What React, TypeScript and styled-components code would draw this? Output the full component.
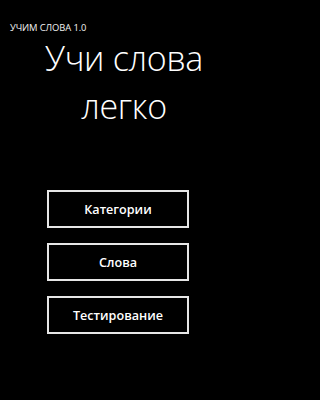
import React from 'react';
import styled, { createGlobalStyle } from 'styled-components';

const GlobalStyle = createGlobalStyle`
  html, body {
    margin: 0;
    padding: 0;
    background: #000;
  }
  body {
    font-family: 'Open Sans', 'Noto Sans', 'Liberation Sans', sans-serif;
    color: #fff;
  }
`;

const Screen = styled.div`
  width: 240px;
  height: 400px;
  background: #000;
  display: flex;
  flex-direction: column;
  overflow: hidden;
`;

const AppName = styled.div`
  margin: 21px 0 0 10px;
  font-size: 9.4px;
  line-height: 13px;
  letter-spacing: -0.1px;
  text-transform: uppercase;
  color: #f2f2f2;
`;

const PageTitle = styled.h1`
  margin: 0 0 0 8px;
  font-size: 34px;
  font-weight: 300;
  line-height: 48px;
  letter-spacing: -0.3px;
  text-align: center;
  color: #fff;
`;

const Menu = styled.div`
  display: flex;
  flex-direction: column;
  align-items: center;
  gap: 15px;
  margin: 60px 0 0 -4px;
`;

const MenuButton = styled.button`
  box-sizing: border-box;
  width: 142px;
  height: 38px;
  background: transparent;
  border: 2px solid #e6e6e6;
  border-radius: 0;
  color: #fff;
  font-family: inherit;
  font-size: 12.6px;
  font-weight: 600;
  padding: 0;
  cursor: pointer;
`;

const items = ['Категории', 'Слова', 'Тестирование'];

export default function App() {
  return (
    <>
      <GlobalStyle />
      <Screen>
        <AppName>Учим слова 1.0</AppName>
        <PageTitle>
          Учи слова
          <br />
          легко
        </PageTitle>
        <Menu>
          {items.map((label) => (
            <MenuButton key={label}>{label}</MenuButton>
          ))}
        </Menu>
      </Screen>
    </>
  );
}
